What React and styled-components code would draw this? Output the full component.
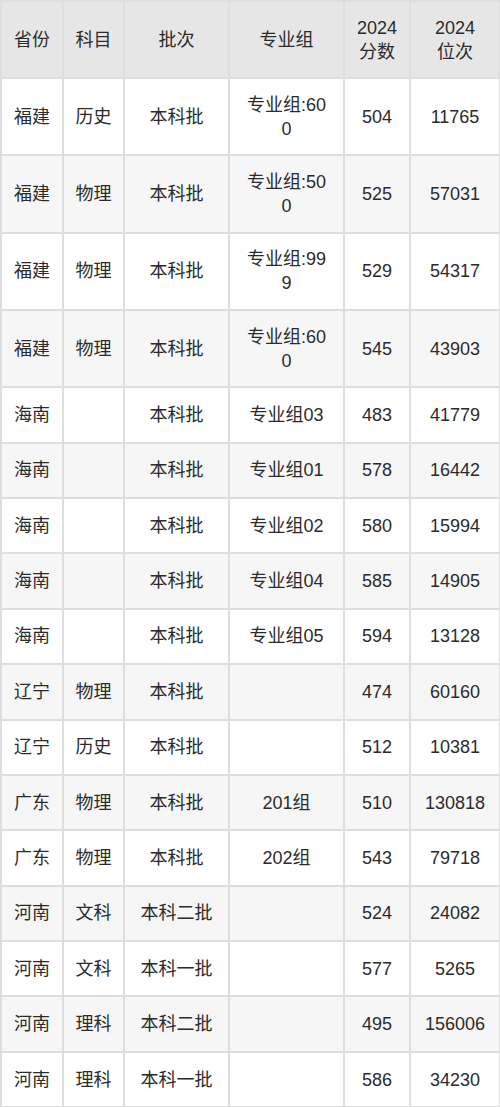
import React from "react";
import styled, { createGlobalStyle } from "styled-components";

const Global = createGlobalStyle`
  html, body { margin: 0; padding: 0; background: #fff; }
  body { font-family: "Liberation Sans", "Noto Sans CJK SC", sans-serif; }
`;

const Table = styled.table`
  width: 499px;
  border-collapse: collapse;
  table-layout: fixed;
  color: #2b2b2b;
  font-size: 18px;
  line-height: 24px;
`;

const Col = styled.col`
  width: ${(p) => p.$w}px;
`;

const HeadRow = styled.tr`
  background: #e6e6e6;
  height: 77px;
`;

const Row = styled.tr`
  background: ${(p) => (p.$alt ? "#f6f6f6" : "#ffffff")};
  height: ${(p) => (p.$tall ? "77.3px" : "55.4px")};
`;

const Th = styled.th`
  border: 2px solid #dedede;
  font-weight: normal;
  text-align: center;
  vertical-align: middle;
  padding: 0 4px;
`;

const Td = styled.td`
  border: 2px solid #dedede;
  text-align: center;
  vertical-align: middle;
  padding: 0 ${(p) => (p.$wide ? 12 : 4)}px;
  word-break: break-all;
`;

const cols = [62, 61, 105, 115, 66, 90];
const headers = [["省份"], ["科目"], ["批次"], ["专业组"], ["2024", "分数"], ["2024", "位次"]];

const data = [
  ["福建", "历史", "本科批", "专业组:600", "504", "11765"],
  ["福建", "物理", "本科批", "专业组:500", "525", "57031"],
  ["福建", "物理", "本科批", "专业组:999", "529", "54317"],
  ["福建", "物理", "本科批", "专业组:600", "545", "43903"],
  ["海南", "", "本科批", "专业组03", "483", "41779"],
  ["海南", "", "本科批", "专业组01", "578", "16442"],
  ["海南", "", "本科批", "专业组02", "580", "15994"],
  ["海南", "", "本科批", "专业组04", "585", "14905"],
  ["海南", "", "本科批", "专业组05", "594", "13128"],
  ["辽宁", "物理", "本科批", "", "474", "60160"],
  ["辽宁", "历史", "本科批", "", "512", "10381"],
  ["广东", "物理", "本科批", "201组", "510", "130818"],
  ["广东", "物理", "本科批", "202组", "543", "79718"],
  ["河南", "文科", "本科二批", "", "524", "24082"],
  ["河南", "文科", "本科一批", "", "577", "5265"],
  ["河南", "理科", "本科二批", "", "495", "156006"],
  ["河南", "理科", "本科一批", "", "586", "34230"],
];

export default function App() {
  return (
    <>
      <Global />
      <Table>
        <colgroup>
          {cols.map((w, i) => (
            <Col key={i} $w={w} />
          ))}
        </colgroup>
        <thead>
          <HeadRow>
            {headers.map((h, i) => (
              <Th key={i}>
                {h.map((line, k) => (
                  <React.Fragment key={k}>
                    {k > 0 && <br />}
                    {line}
                  </React.Fragment>
                ))}
              </Th>
            ))}
          </HeadRow>
        </thead>
        <tbody>
          {data.map((r, i) => (
            <Row key={i} $alt={i % 2 === 1} $tall={i < 4}>
              {r.map((c, j) => (
                <Td key={j} $wide={j === 3}>
                  {c}
                </Td>
              ))}
            </Row>
          ))}
        </tbody>
      </Table>
    </>
  );
}
